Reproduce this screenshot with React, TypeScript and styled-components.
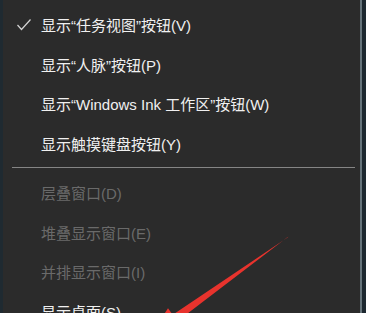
import React from 'react';
import styled, { createGlobalStyle } from 'styled-components';

const GlobalStyle = createGlobalStyle`
  html, body {
    margin: 0;
    padding: 0;
    background: #1f2930;
    overflow: hidden;
  }
`;

type Item = { label: string; checked?: boolean; disabled?: boolean } | 'sep';

const items: Item[] = [
  { label: '显示“任务视图”按钮(V)', checked: true },
  { label: '显示“人脉”按钮(P)' },
  { label: '显示“Windows Ink 工作区”按钮(W)' },
  { label: '显示触摸键盘按钮(Y)' },
  'sep',
  { label: '层叠窗口(D)', disabled: true },
  { label: '堆叠显示窗口(E)', disabled: true },
  { label: '并排显示窗口(I)', disabled: true },
  { label: '显示桌面(S)' },
];

const App: React.FC = (): JSX.Element => {
  return (
    <Screen>
      <GlobalStyle />
      <EdgeLeft />
      <Menu>
        {items.map((item, i) =>
          item === 'sep' ? (
            <Separator key={i} />
          ) : (
            <Row key={i} $disabled={item.disabled}>
              <CheckSlot>
                {item.checked && (
                  <svg width="16" height="14" viewBox="0 0 16 14">
                    <path d="M1.5 7 L5.5 11.5 L14.5 1.5" fill="none" stroke="#d4d4d4" strokeWidth="1.2" />
                  </svg>
                )}
              </CheckSlot>
              <Label>{item.label}</Label>
            </Row>
          )
        )}
      </Menu>
      <EdgeRight />
      <Arrow width="366" height="313" viewBox="0 0 366 313">
        <polygon points="288.4,236.6 287.6,237.4 172.7,314.8 177.3,321.3" fill="#e8332d" />
        <polygon points="168,308.2 182,327.8 150.6,335.5" fill="#e8332d" />
      </Arrow>
    </Screen>
  );
};

const Screen = styled.div`
  position: relative;
  display: flex;
  width: 366px;
  height: 313px;
  overflow: hidden;
`;

const EdgeLeft = styled.div`
  width: 3px;
  background: #1f2a31;
`;

const EdgeRight = styled.div`
  width: 4px;
  background: #1d2830;
`;

const Menu = styled.div`
  flex: 1;
  background: #2b2b2b;
  border-right: 2px solid #66747b;
  padding-top: 5px;
  display: flex;
  flex-direction: column;
`;

const Row = styled.div<{ $disabled?: boolean }>`
  height: 39.5px;
  flex-shrink: 0;
  display: flex;
  align-items: center;
  color: ${(p) => (p.$disabled ? '#6a6a6a' : '#f0f0f0')};
`;

const CheckSlot = styled.div`
  width: 38px;
  display: flex;
  justify-content: center;
  padding-left: 4px;
  box-sizing: border-box;
`;

const Label = styled.span`
  font-family: 'Liberation Sans', 'Noto Sans CJK SC', sans-serif;
  font-size: 15px;
  white-space: nowrap;
`;

const Separator = styled.div`
  height: 1px;
  flex-shrink: 0;
  margin: 4px 5px 5px 9px;
  background: #858585;
`;

const Arrow = styled.svg`
  position: absolute;
  left: 0;
  top: 0;
  pointer-events: none;
`;

export default App;
